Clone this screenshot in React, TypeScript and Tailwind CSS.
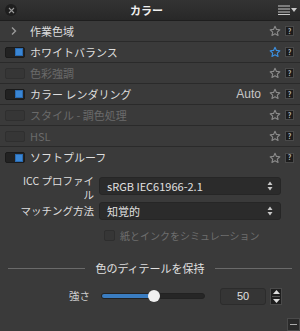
import React from "react";

const font = { fontFamily: '"Noto Sans CJK JP", "Noto Sans", sans-serif' };

function Star({ active }: { active?: boolean }) {
  return (
    <svg width="12" height="12" viewBox="0 0 24 24" fill="none" stroke={active ? "#3b8fe0" : "#8a8a8a"} strokeWidth="2.2" strokeLinejoin="round">
      <path d="M12 2.5l2.9 6.3 6.8.7-5.1 4.6 1.5 6.8L12 17.4l-6.1 3.5 1.5-6.8-5.1-4.6 6.8-.7z" />
    </svg>
  );
}

function Help() {
  return (
    <div className="w-[9px] h-[10px] bg-[#1c1c1c] border border-[#4a4a4a] flex items-center justify-center text-[7px] leading-none text-[#bbb] font-bold">?</div>
  );
}

function Toggle({ on, disabled }: { on?: boolean; disabled?: boolean }) {
  return (
    <div className={`w-[20px] h-[11px] rounded-[2px] flex justify-end items-center pr-[1px] ${disabled ? "border border-[#2f2f2f] bg-[#363636]" : "bg-[#222] border border-[#1a1a1a]"}`}>
      {on && <div className="w-[8px] h-[8px] bg-[#3a86d4] border border-[#2a6ab0]" />}
    </div>
  );
}

function Row({ label, on, disabled, chevron, star, right, last }: { label: string; on?: boolean; disabled?: boolean; chevron?: boolean; star?: boolean; right?: string; last?: boolean }) {
  return (
    <div className={`h-[21px] flex items-center bg-[#3a3a3a] ${last ? "" : "border-b border-[#2a2a2a]"}`}>
      <div className="w-[30px] flex items-center pl-[5px]">
        {chevron ? (
          <svg width="8" height="10" viewBox="0 0 8 10" className="ml-[5px]"><path d="M2 1.5l3.5 3.5L2 8.5" stroke="#9a9a9a" strokeWidth="1.4" fill="none" /></svg>
        ) : (
          <Toggle on={on} disabled={disabled} />
        )}
      </div>
      <div className={`flex-1 text-[11px] ${disabled ? "text-[#6a6a6a]" : "text-[#dedede]"}`}>{label}</div>
      {right && <div className="text-[12px] text-[#c8c8c8] mr-[8px]" style={{ fontFamily: '"Liberation Sans", sans-serif' }}>{right}</div>}
      <div className="mr-[4px] flex items-center"><Star active={star} /></div>
      <div className="mr-[6px]"><Help /></div>
    </div>
  );
}

function Select({ value }: { value: string }) {
  return (
    <div className="h-[18px] flex-1 bg-[#2b2b2b] border border-[#262626] rounded-[3px] flex items-center px-[7px] text-[11px] text-[#e0e0e0]">
      <span className="flex-1" style={{ fontFamily: '"Noto Sans CJK JP", "Liberation Sans", sans-serif' }}>{value}</span>
      <svg width="6" height="10" viewBox="0 0 6 10"><path d="M3 0.5L5.5 4H0.5z M3 9.5L5.5 6H0.5z" fill="#c8c8c8" /></svg>
    </div>
  );
}

export default function App() {
  return (
    <div className="w-[300px] h-[331px] bg-[#3a3a3a] flex flex-col relative overflow-hidden" style={font}>
      <div className="h-[21px] flex items-center bg-gradient-to-b from-[#333] to-[#282828] border-b border-[#1e1e1e] shrink-0">
        <div className="w-[12px] h-[12px] rounded-full bg-[#1e1e1e] ml-[5px] flex items-center justify-center">
          <svg width="7" height="7" viewBox="0 0 7 7"><path d="M1 1l5 5M6 1l-5 5" stroke="#9a9a9a" strokeWidth="1.1" /></svg>
        </div>
        <div className="flex-1 text-center text-[11px] font-bold text-[#f0f0f0] pr-[2px]">カラー</div>
        <div className="flex items-center mr-[3px] gap-[1px]">
          <svg width="12" height="10" viewBox="0 0 12 10"><path d="M0 1h12M0 4h12M0 7h12M0 9.5h12" stroke="#c8c8c8" strokeWidth="1.2" /></svg>
          <svg width="6" height="5" viewBox="0 0 6 5"><path d="M0 0h6L3 4z" fill="#c8c8c8" /></svg>
        </div>
      </div>
      <Row label="作業色域" chevron />
      <Row label="ホワイトバランス" on star />
      <Row label="色彩強調" disabled />
      <Row label="カラー レンダリング" on right="Auto" />
      <Row label="スタイル - 調色処理" disabled />
      <Row label="HSL" disabled />
      <Row label="ソフトプルーフ" on last />
      <div className="flex flex-col pl-[19px] pr-[19px] pt-[9px]">
        <div className="flex items-start gap-[5px] h-[19px]">
          <div className="w-[75px] text-right text-[10.5px] leading-[14px] text-[#dedede] -mt-[3px]">
            ICC プロファイ<br />ル
          </div>
          <Select value="sRGB IEC61966-2.1" />
        </div>
        <div className="flex items-center gap-[5px] mt-[6px]">
          <div className="w-[75px] text-right text-[10.5px] text-[#dedede] whitespace-nowrap">マッチング方法</div>
          <Select value="知覚的" />
        </div>
        <div className="flex items-center mt-[8px] ml-[85px] gap-[5px]">
          <div className="w-[11px] h-[11px] rounded-[2px] border border-[#2e2e2e] bg-[#363636]" />
          <div className="text-[10px] text-[#6e6e6e]">紙とインクをシミュレーション</div>
        </div>
      </div>
      <div className="flex items-center mt-[17px] px-[8px] gap-[10px]">
        <div className="flex-1 h-px bg-[#6a6a6a]" />
        <div className="text-[11px] text-[#e0e0e0]">色のディテールを保持</div>
        <div className="flex-1 h-px bg-[#6a6a6a]" />
      </div>
      <div className="flex items-center mt-[11px]">
        <div className="w-[91px] text-right text-[10.5px] text-[#cfcfcf] pr-[1px]">強さ</div>
        <div className="ml-[10px] w-[104px] h-[6px] rounded-full bg-[#262626] border border-[#222] relative flex items-center">
          <div className="h-full w-[52px] bg-[#3a7cc0] rounded-full" />
          <div className="absolute left-[46px] w-[12px] h-[12px] rounded-full bg-[#f0f0f0]" />
        </div>
        <div className="ml-[15px] w-[46px] h-[17px] rounded-[3px] border border-[#2c2c2c] bg-[#353535] flex items-center justify-center text-[11px] text-[#e0e0e0]" style={{ fontFamily: '"Liberation Sans", sans-serif' }}>50</div>
        <div className="ml-[4px] w-[12px] h-[17px] bg-[#1e1e1e] border border-[#4a4a4a] flex flex-col items-center justify-center gap-[2px]">
          <svg width="7" height="4" viewBox="0 0 7 4"><path d="M3.5 0L7 4H0z" fill="#ddd" /></svg>
          <div className="w-[8px] h-px bg-[#555]" />
          <svg width="7" height="4" viewBox="0 0 7 4"><path d="M0 0h7L3.5 4z" fill="#ddd" /></svg>
        </div>
      </div>
      <div className="absolute right-0 bottom-0 w-[13px] h-[13px] bg-[#2a2a2a] border border-[#4a4a4a] flex items-center justify-center">
        <div className="w-[7px] h-px bg-[#aaa]" />
      </div>
    </div>
  );
}
